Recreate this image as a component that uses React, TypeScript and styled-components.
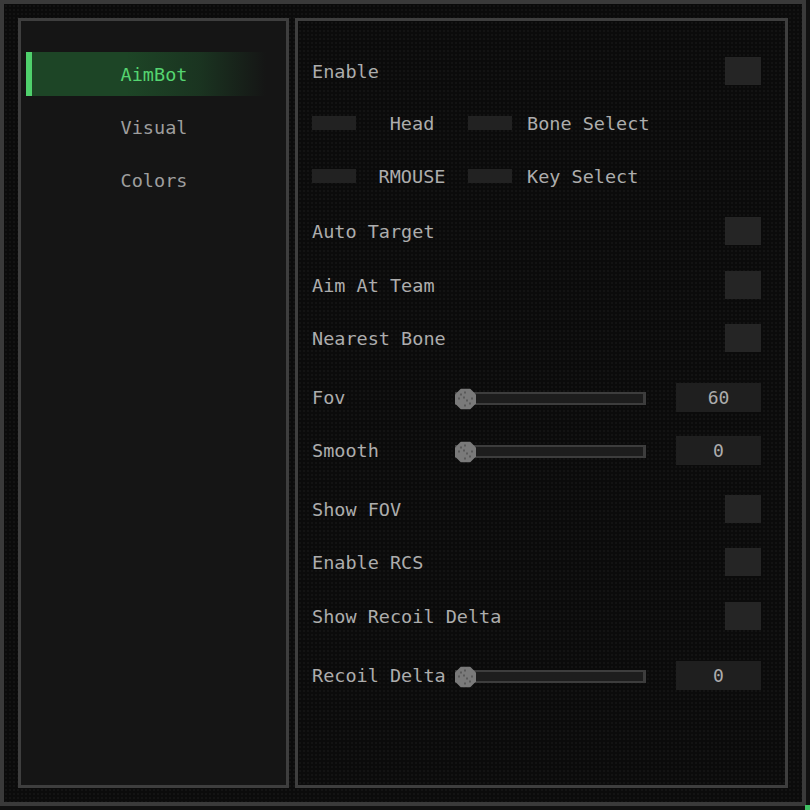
import React from "react";
import styled, { createGlobalStyle } from "styled-components";

const Global = createGlobalStyle`
  html, body { margin: 0; padding: 0; background: #111111; }
  body { width: 810px; height: 810px; overflow: hidden; font-family: "DejaVu Sans Mono", "Liberation Mono", monospace; }
  * { box-sizing: border-box; }
`;

const Stage = styled.div`
  position: relative;
  width: 810px;
  height: 810px;
`;

const Window = styled.div`
  width: 806px;
  height: 806px;
  border: 4px solid #3a3a3a;
  background-color: #0b0b0b;
  background-image: radial-gradient(rgba(255, 255, 255, 0.05) 0.6px, transparent 0.9px);
  background-size: 4px 4px;
  padding: 14px;
  display: flex;
  gap: 6px;
`;

const Grip = styled.div`
  position: absolute;
  left: 805px;
  top: 805px;
  width: 5px;
  height: 5px;
  background: #3fbf63;
`;

const Panel = styled.div<{ $side: "left" | "right" }>`
  border: 3px solid #3e3e3e;
  height: 100%;
  display: flex;
  flex-direction: column;
  ${(p) =>
    p.$side === "left"
      ? `
    width: 271px;
    flex: none;
    background: #151515;
    padding: 31px 20px 0 5px;
    gap: 9px;
  `
      : `
    flex: 1;
    background-color: #0b0b0b;
    background-image: radial-gradient(rgba(255,255,255,0.05) 0.6px, transparent 0.9px);
    background-size: 4px 4px;
    padding: 36px 24px 0 14px;
  `}
`;

const Tab = styled.div<{ $active?: boolean }>`
  height: 44px;
  display: flex;
  align-items: center;
  justify-content: center;
  font-size: 18.5px;
  color: ${(p) => (p.$active ? "#55d470" : "#9e9e9e")};
  border-left: 6px solid ${(p) => (p.$active ? "#4fd06c" : "transparent")};
  background: ${(p) =>
    p.$active
      ? "linear-gradient(90deg, #1d4526 0%, #1d4526 40%, rgba(30, 72, 40, 0.6) 72%, rgba(21, 21, 21, 0) 100%)"
      : "transparent"};
  padding-left: 10px;
`;

const Row = styled.div<{ $mt: number; $h?: number }>`
  display: flex;
  align-items: center;
  height: ${(p) => p.$h ?? 28}px;
  margin-top: ${(p) => p.$mt}px;
`;

const Label = styled.span<{ $w?: number }>`
  font-size: 18.5px;
  color: #adadad;
  white-space: nowrap;
  ${(p) => (p.$w ? `width: ${p.$w}px; flex: none;` : "flex: 1;")}
`;

const Check = styled.div`
  width: 36px;
  height: 28px;
  background: #252525;
  flex: none;
`;

const ComboBox = styled.div`
  width: 44px;
  height: 14px;
  background: #222222;
  flex: none;
`;

const ComboValue = styled.span`
  width: 112px;
  text-align: center;
  font-size: 18.5px;
  color: #adadad;
  flex: none;
`;

const ComboLabel = styled.span`
  margin-left: 15px;
  font-size: 18.5px;
  color: #adadad;
  white-space: nowrap;
`;

const Track = styled.div`
  position: relative;
  width: 191px;
  height: 13px;
  margin-top: 2px;
  border: 2px solid #3d3d3d;
  border-right-width: 3px;
  background: #1d1d1d;
  flex: none;
`;

const KnobWrap = styled.div`
  position: absolute;
  left: -2px;
  top: 50%;
  width: 21px;
  height: 21px;
  transform: translateY(-50%);
`;

const ValueBox = styled.div`
  margin-left: auto;
  width: 85px;
  height: 29px;
  background: #1f1f1f;
  display: flex;
  align-items: center;
  justify-content: center;
  font-size: 18px;
  color: #adadad;
  flex: none;
`;

const Knob = () => (
  <KnobWrap>
    <svg width="21" height="21" viewBox="0 0 21 21">
      <polygon points="6,0 15,0 21,6 21,15 15,21 6,21 0,15 0,6" fill="#7a7a7a" />
      <g fill="#5a5a5a">
        <rect x="9" y="3" width="2" height="2" />
        <rect x="9" y="16" width="2" height="2" />
        <rect x="3" y="9" width="2" height="2" />
        <rect x="16" y="9" width="2" height="2" />
        <rect x="8" y="8" width="2" height="2" />
        <rect x="11" y="11" width="2" height="2" />
        <rect x="5" y="5" width="2" height="2" />
        <rect x="14" y="14" width="2" height="2" />
      </g>
    </svg>
  </KnobWrap>
);

const CheckRow = ({ label, mt }: { label: string; mt: number }) => (
  <Row $mt={mt}>
    <Label>{label}</Label>
    <Check />
  </Row>
);

const ComboRow = ({ value, label, mt }: { value: string; label: string; mt: number }) => (
  <Row $mt={mt}>
    <ComboBox />
    <ComboValue>{value}</ComboValue>
    <ComboBox />
    <ComboLabel>{label}</ComboLabel>
  </Row>
);

const SliderRow = ({ label, value, mt }: { label: string; value: string; mt: number }) => (
  <Row $mt={mt} $h={29}>
    <Label $w={143}>{label}</Label>
    <Track>
      <Knob />
    </Track>
    <ValueBox>{value}</ValueBox>
  </Row>
);

export default function App() {
  return (
    <Stage>
      <Global />
      <Window>
        <Panel $side="left">
          <Tab $active>AimBot</Tab>
          <Tab>Visual</Tab>
          <Tab>Colors</Tab>
        </Panel>
        <Panel $side="right">
          <CheckRow label="Enable" mt={0} />
          <ComboRow value="Head" label="Bone Select" mt={24} />
          <ComboRow value="RMOUSE" label="Key Select" mt={25} />
          <CheckRow label="Auto Target" mt={27} />
          <CheckRow label="Aim At Team" mt={26} />
          <CheckRow label="Nearest Bone" mt={25} />
          <SliderRow label="Fov" value="60" mt={31} />
          <SliderRow label="Smooth" value="0" mt={24} />
          <CheckRow label="Show FOV" mt={30} />
          <CheckRow label="Enable RCS" mt={25} />
          <CheckRow label="Show Recoil Delta" mt={26} />
          <SliderRow label="Recoil Delta" value="0" mt={31} />
        </Panel>
      </Window>
      <Grip />
    </Stage>
  );
}
